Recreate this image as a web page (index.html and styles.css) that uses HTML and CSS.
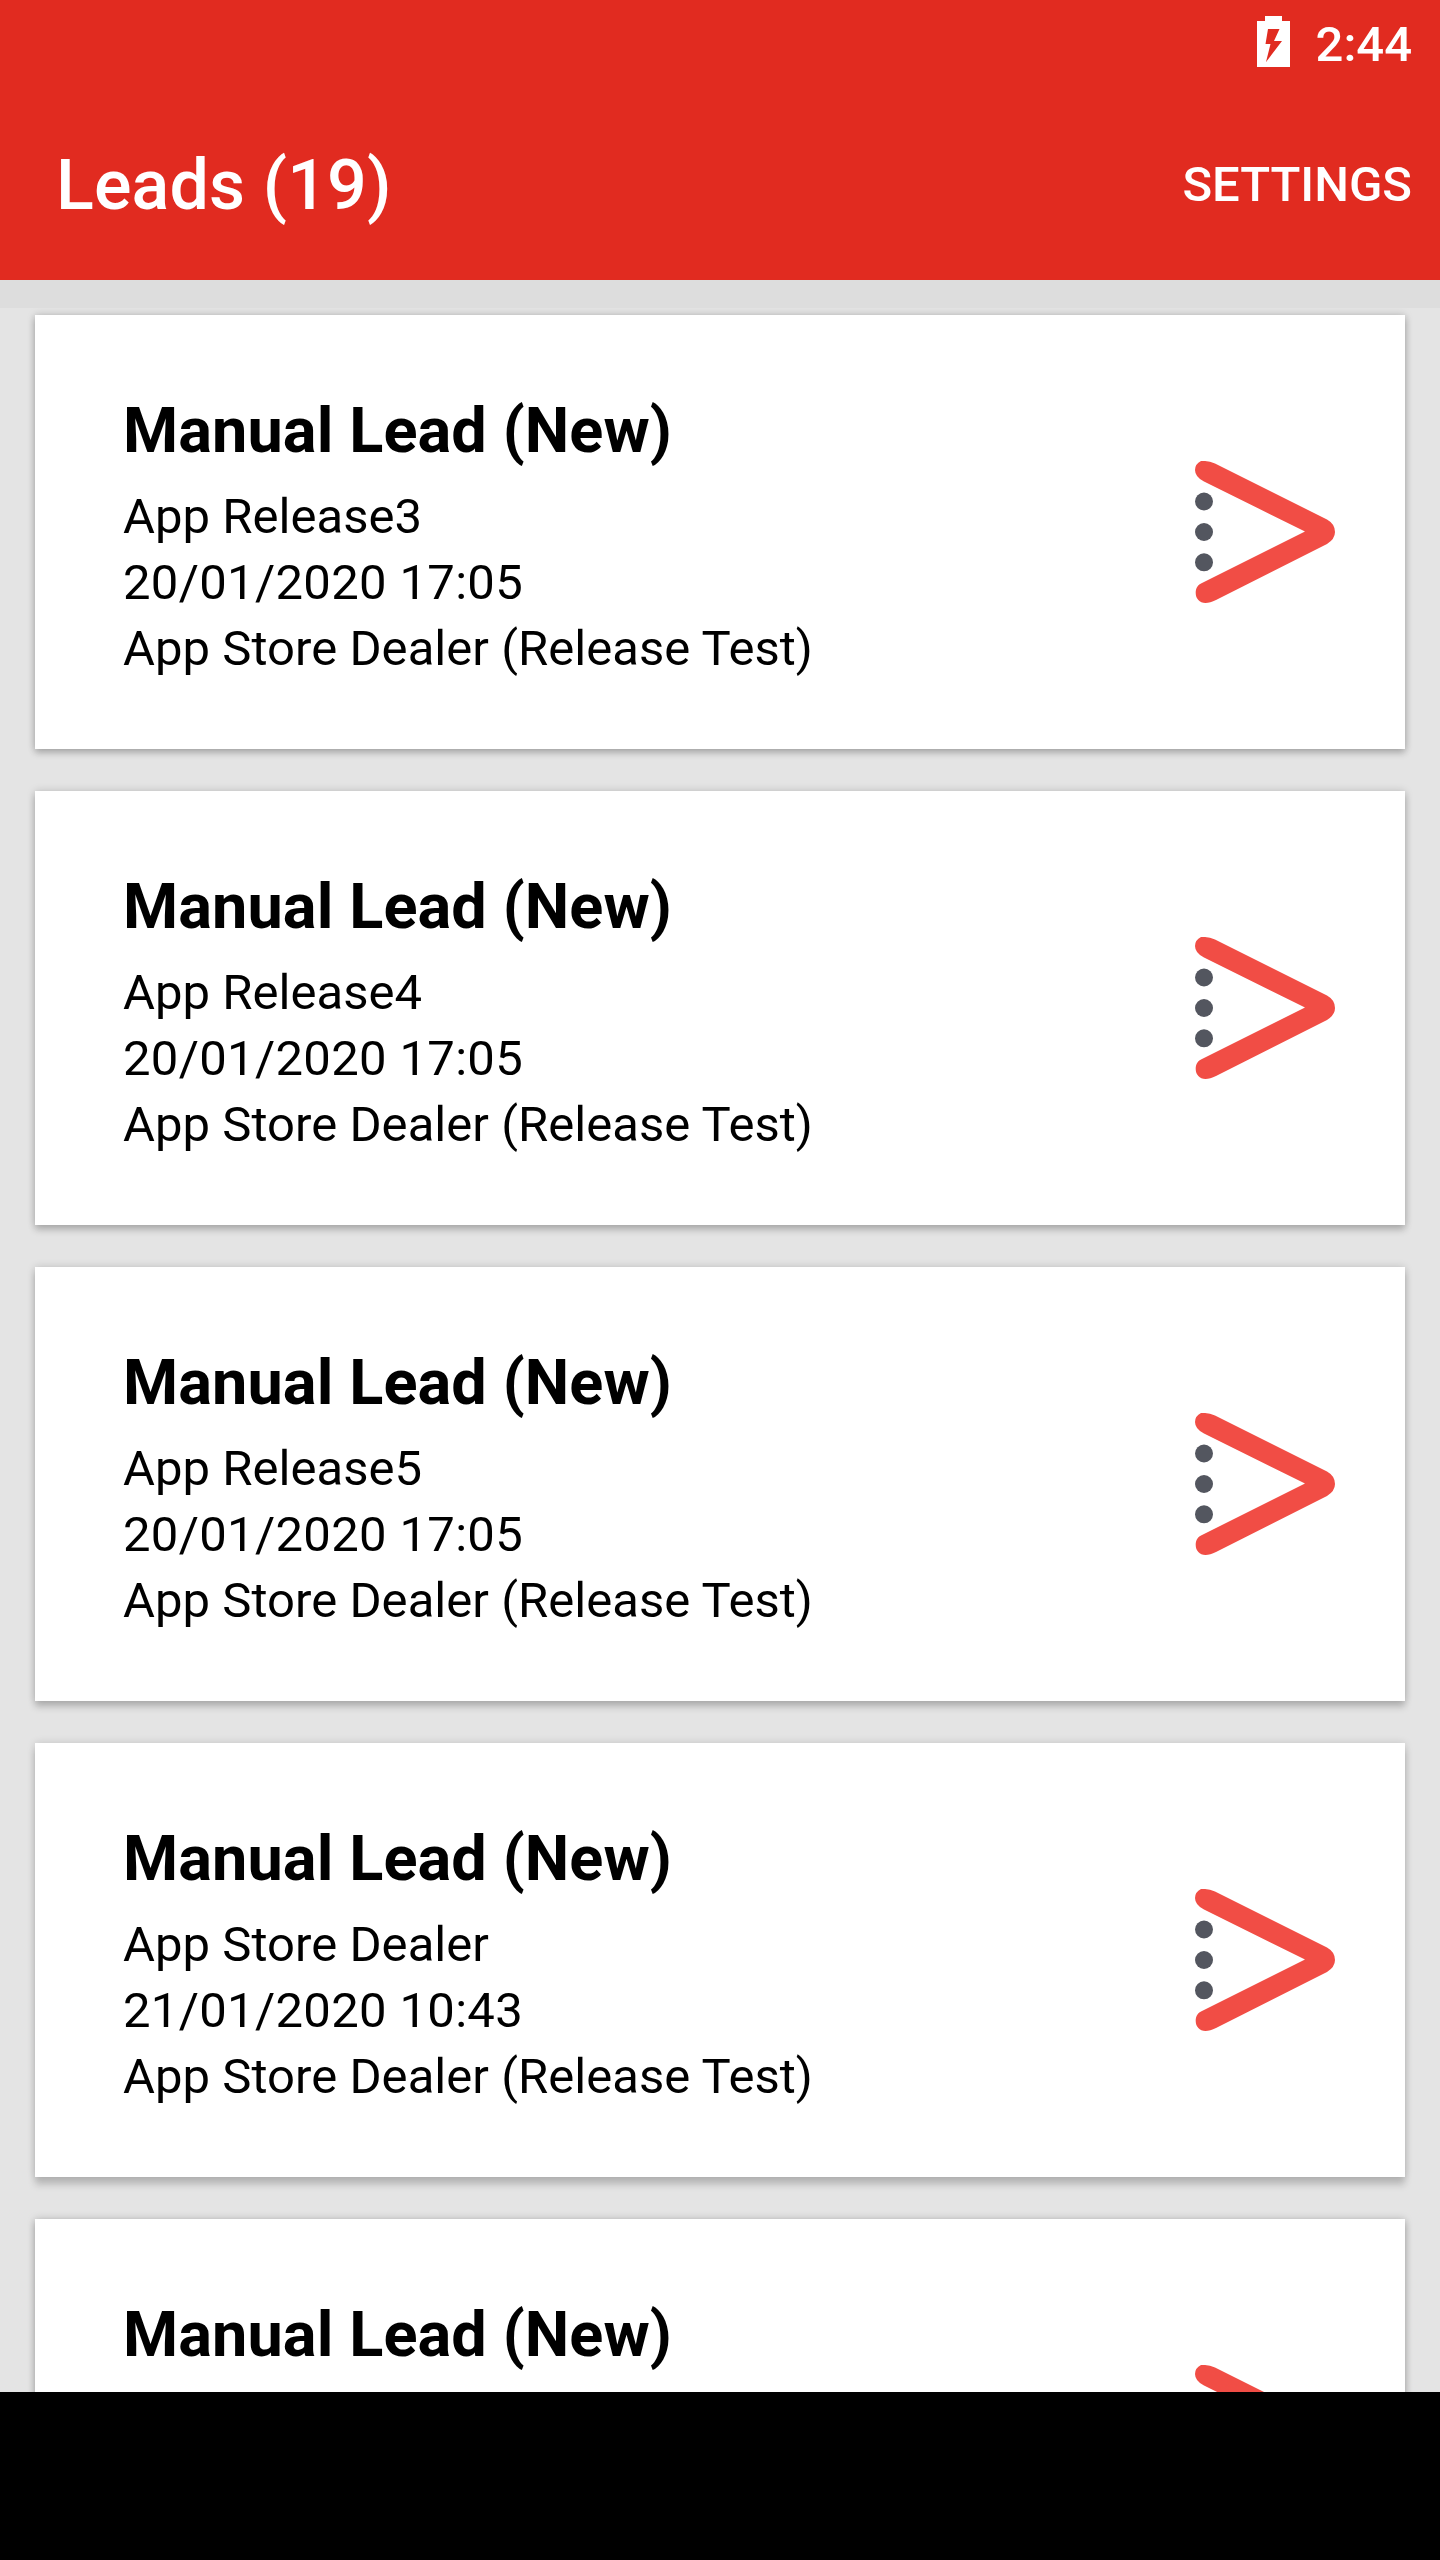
FILE: index.html
```html
<!DOCTYPE html>
<html lang="en">
<head>
<meta charset="utf-8">
<title>Leads</title>
<link rel="stylesheet" href="styles.css">
</head>
<body>
<svg class="defs" width="0" height="0" aria-hidden="true">
  <symbol id="arrow" viewBox="0 0 140 142">
    <path fill="#f14d45" d="M6 0H10Q15 0 20 2.500L132 58.500Q140 63 140 71Q140 78 132 83L21 139Q15 142 10.500 142C4.500 142 .700 137.500 .700 132C.700 127 3 123.500 7 122L110 70.500L9 20.500Q0 16 0 9Q0 3 6 0Z"/>
    <g fill="#53565f"><circle cx="9" cy="40.500" r="9"/><circle cx="9" cy="71" r="9"/><circle cx="9" cy="101.300" r="9"/></g>
  </symbol>
</svg>
<div class="screen">
  <header class="header">
    <div class="status">
      <svg class="battery" width="33" height="51" viewBox="0 0 33 51"><path fill="#fff" fill-rule="evenodd" d="M8 0H25V5H33V51H0V5H8ZM11 13L8.500 28H13.500L9 46L25 25H17L22.500 13Z"/></svg>
      <span class="time">2:44</span>
    </div>
    <div class="toolbar">
      <h1 class="title">Leads (19)</h1>
      <span class="settings">SETTINGS</span>
    </div>
  </header>
  <div class="strip"></div>
  <main class="list">
    <article class="card">
      <div class="info"><h2 class="name">Manual Lead (New)</h2><p>App Release3</p><p class="date">20/01/2020 17:05</p><p>App Store Dealer (Release Test)</p></div>
      <svg class="arrow"><use href="#arrow"/></svg>
    </article>
    <article class="card card-2">
      <div class="info"><h2 class="name">Manual Lead (New)</h2><p>App Release4</p><p class="date">20/01/2020 17:05</p><p>App Store Dealer (Release Test)</p></div>
      <svg class="arrow"><use href="#arrow"/></svg>
    </article>
    <article class="card card-3">
      <div class="info"><h2 class="name">Manual Lead (New)</h2><p>App Release5</p><p class="date">20/01/2020 17:05</p><p>App Store Dealer (Release Test)</p></div>
      <svg class="arrow"><use href="#arrow"/></svg>
    </article>
    <article class="card card-4">
      <div class="info"><h2 class="name">Manual Lead (New)</h2><p>App Store Dealer</p><p class="date">21/01/2020 10:43</p><p>App Store Dealer (Release Test)</p></div>
      <svg class="arrow"><use href="#arrow"/></svg>
    </article>
    <article class="card">
      <div class="info"><h2 class="name">Manual Lead (New)</h2></div>
      <svg class="arrow"><use href="#arrow"/></svg>
    </article>
  </main>
  <footer class="navbar"></footer>
</div>
</body>
</html>
```
FILE: styles.css
```css
* { box-sizing: border-box; margin: 0; }
body { background: #000; font-family: Roboto, sans-serif; }
.defs { display: block; }
.screen {
  display: flex;
  flex-direction: column;
  width: 1440px;
  height: 2560px;
  overflow: hidden;
  background: #e4e4e4;
}
.header { flex: none; height: 280px; background: #e12b20; color: #fff; }
.status {
  display: flex;
  justify-content: flex-end;
  gap: 26px;
  height: 84px;
  padding: 16px 28px 0 0;
}
.battery { flex: none; }
.time { font-size: 49px; font-weight: 500; line-height: 58px; }
.toolbar {
  display: flex;
  justify-content: space-between;
  align-items: center;
  height: 196px;
  padding: 5px 28px 0 56px;
}
.title { font-size: 70px; font-weight: 500; line-height: 82px; letter-spacing: .15px; }
.settings { font-size: 49px; font-weight: 500; line-height: 58px; }
.strip { flex: none; height: 28px; background: #ddd; }
.list {
  flex: 1;
  min-height: 0;
  overflow: hidden;
  display: flex;
  flex-direction: column;
  gap: 42px;
  padding: 7px 35px 0;
}
.card {
  flex: none;
  display: flex;
  justify-content: space-between;
  height: 434px;
  padding: 75px 70px 0 88px;
  background: #fff;
  box-shadow: 0 4px 7px rgba(0, 0, 0, .2), 0 0 8px rgba(0, 0, 0, .18);
}
.card-2 { box-shadow: 0 5px 7px rgba(0, 0, 0, .19), 0 0 8px rgba(0, 0, 0, .17); }
.card-3 { box-shadow: 0 6px 7px rgba(0, 0, 0, .18), 0 0 8px rgba(0, 0, 0, .16); }
.card-4 { box-shadow: 0 8px 7px rgba(0, 0, 0, .17), 0 0 8px rgba(0, 0, 0, .14); }
.info { font-size: 49px; line-height: 66px; color: #000; letter-spacing: .04px; }
.name { font-size: 63px; font-weight: 700; line-height: 82px; margin-bottom: 12px; letter-spacing: .1px; }
.date { letter-spacing: .32px; }
.arrow { flex: none; width: 140px; height: 142px; margin-top: 71px; }
.navbar { flex: none; height: 168px; background: #000; }
```
